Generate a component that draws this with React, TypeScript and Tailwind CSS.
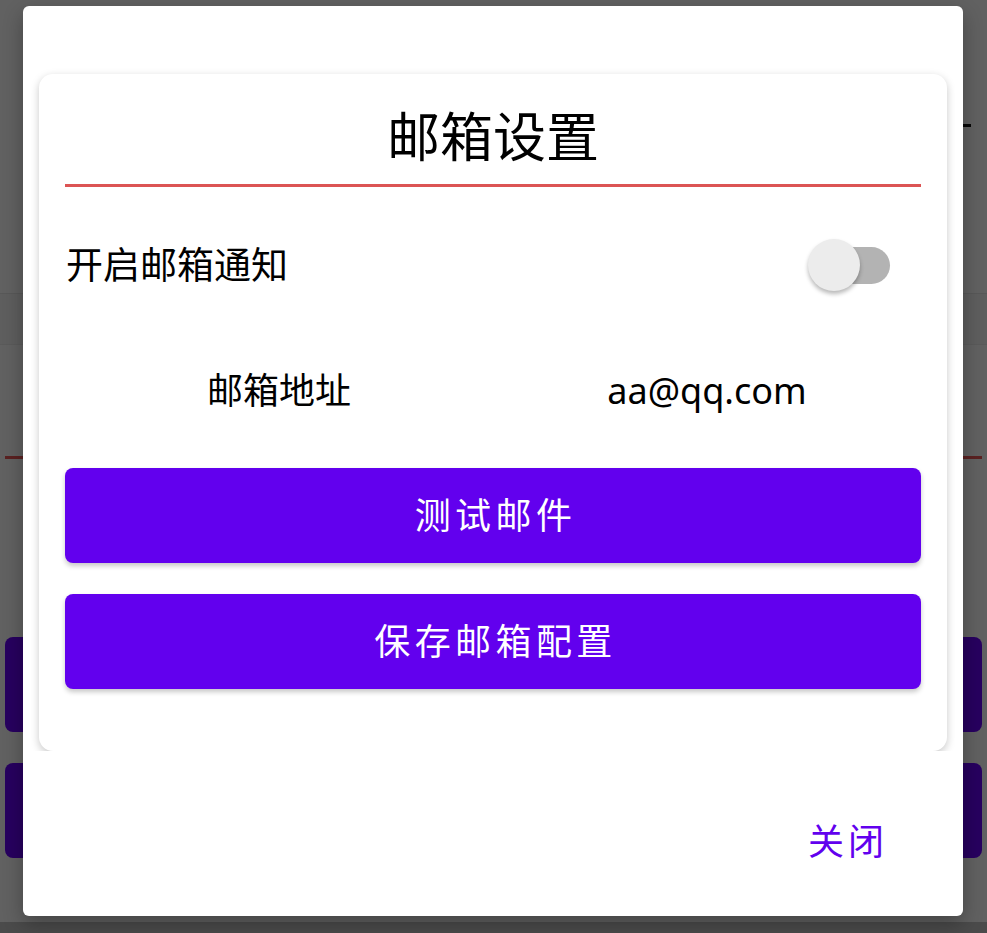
import React from "react";

const font = { fontFamily: '"Noto Sans", "Noto Sans CJK SC", sans-serif' };

function Switch() {
  return (
    <div className="relative w-[82px] h-[52px] shrink-0">
      <div className="absolute right-0 top-[8px] w-[64px] h-[37px] rounded-full bg-[#b3b3b3]" />
      <div className="absolute left-0 top-0 w-[52px] h-[52px] rounded-full bg-[#ececec] shadow-[0_3px_4px_rgba(0,0,0,0.28)]" />
    </div>
  );
}

export default function App() {
  return (
    <div className="w-[987px] h-[933px] flex flex-col overflow-hidden" style={font}>
      <div className="relative h-[922px] w-full bg-[#f3f3f3]">
        {/* underlying page */}
        <div className="flex flex-col w-full h-full">
          <div className="h-[293px] flex flex-col">
            <div className="mt-[124px] flex justify-end pr-[16px]">
              <div className="w-[8px] h-[3px] bg-[#111]" />
            </div>
          </div>
          <div className="h-[52px] bg-[#ececec] border-t border-[#dcdcdc] border-b border-b-[#e2e2e2]" />
          <div className="mt-[111px] mx-[5px] h-[3px] bg-[#e05454]" />
          <div className="mt-[178px] mx-[5px] h-[95px] rounded-[8px] bg-[#6200ee]" />
          <div className="mt-[31px] mx-[5px] h-[95px] rounded-[8px] bg-[#6200ee]" />
        </div>
        {/* overlay */}
        <div className="absolute inset-0 bg-black/60 flex items-center">
          <div className="ml-[23px] w-[940px] h-[910px] bg-white rounded-[6px] shadow-[0_8px_20px_rgba(0,0,0,0.3)] flex flex-col px-[16px] pt-[68px]">
            <div className="-mx-[8px] -mt-[8px] px-[8px] pt-[8px] overflow-hidden">
              <div className="bg-white rounded-[14px] shadow-[0_3px_8px_rgba(0,0,0,0.22)] px-[26px] pb-[62px]">
                <div className="pt-[33px] pb-[17px] text-center text-[53px] leading-[60px] text-black">
                  邮箱设置
                </div>
                <div className="h-[3px] bg-[#dc5454]" />
                <div className="h-[156px] flex items-center justify-between pl-[1px] pr-[31px]">
                  <span className="text-[37px] leading-[48px] text-black">开启邮箱通知</span>
                  <Switch />
                </div>
                <div className="h-[96px] grid grid-cols-2 items-center text-center text-[36px] leading-[48px] text-black">
                  <span>邮箱地址</span>
                  <span>aa@qq.com</span>
                </div>
                <button className="mt-[29px] w-full h-[95px] rounded-[8px] bg-[#6200ee] text-white text-[36px] tracking-[4.4px] pl-[5px] shadow-[0_3px_5px_rgba(0,0,0,0.22)] flex items-center justify-center">
                  测试邮件
                </button>
                <button className="mt-[31px] w-full h-[95px] rounded-[8px] bg-[#6200ee] text-white text-[36px] tracking-[4.4px] pl-[5px] shadow-[0_3px_5px_rgba(0,0,0,0.22)] flex items-center justify-center">
                  保存邮箱配置
                </button>
              </div>
            </div>
            <div className="h-[165px] pt-[17px] flex items-center justify-end pr-[59px]">
              <span className="text-[36px] leading-[48px] tracking-[4px] text-[#6200ee]">关闭</span>
            </div>
          </div>
        </div>
      </div>
      <div className="h-[11px] bg-[#4b4b4b]" />
    </div>
  );
}
